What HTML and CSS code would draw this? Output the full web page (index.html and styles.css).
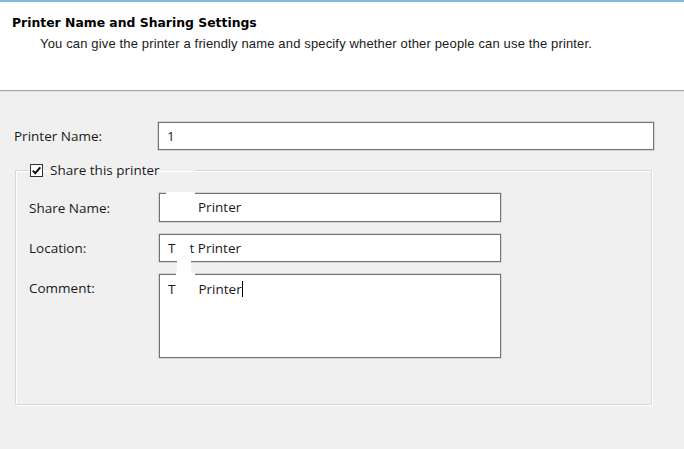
FILE: index.html
```html
<!DOCTYPE html>
<html>
<head>
<meta charset="utf-8">
<link rel="stylesheet" href="styles.css">
</head>
<body>
<div class="page">
  <header class="header">
    <h1 class="title">Printer Name and Sharing Settings</h1>
    <p class="subtitle">You can give the printer a friendly name and specify whether other people can use the printer.</p>
  </header>
  <main class="content">
    <div class="row row-top">
      <span class="label">Printer Name:</span>
      <div class="box box-wide">1</div>
    </div>
    <fieldset class="group">
      <legend class="legend">
        <span class="check">
          <svg width="13" height="13" viewBox="0 0 13 13"><rect x="0.5" y="0.5" width="12" height="12" fill="#fff" stroke="#333"/><path d="M2.8 6.6 L5.2 9.2 L10.3 3.4" fill="none" stroke="#111" stroke-width="2"/></svg>
        </span>
        <span class="legend-text">Share this printer</span>
      </legend>
      <div class="rows">
        <div class="row">
          <span class="label">Share Name:</span>
          <div class="box box-share"><span class="gap gap-share"></span>Printer</div>
        </div>
        <div class="row">
          <span class="label">Location:</span>
          <div class="box">T<span class="gap gap-loc"></span>t Printer</div>
        </div>
        <div class="row row-comment">
          <span class="label">Comment:</span>
          <div class="box box-area">T<span class="gap gap-com"></span>Printer<span class="caret"></span></div>
        </div>
      </div>
    </fieldset>
  </main>
</div>
</body>
</html>
```
FILE: styles.css
```css
html, body {
  margin: 0;
  padding: 0;
}
body {
  background: #f0f0f0;
  width: 684px;
  height: 449px;
  overflow: hidden;
}
.page {
  font-family: "Open Sans", "Noto Sans", sans-serif;
  font-size: 13.5px;
  color: #1a1a1a;
}
.header {
  background: #fff;
  border-top: 2px solid #86b9d8;
  border-bottom: 1px solid #a9a9a9;
  height: 88px;
  box-sizing: content-box;
  padding: 0 0 0 12px;
}
.title {
  margin: 0;
  padding-top: 13px;
  font-family: "DejaVu Sans", Verdana, sans-serif;
  font-weight: bold;
  font-size: 12.4px;
  letter-spacing: 0;
  line-height: 16px;
  color: #000;
}
.subtitle {
  margin: 5px 0 0 28px;
  font-family: "Liberation Sans", Arial, sans-serif;
  font-size: 13px;
  letter-spacing: 0.15px;
  line-height: 16px;
  color: #1a1a1a;
}
.content {
  padding: 30px 30px 0 14px;
  border-top: 1px solid #dedede;
}
.row {
  display: grid;
  grid-template-columns: 130px 342px;
  align-items: center;
}
.row-top {
  grid-template-columns: 144px 496px;
}
.label {
  line-height: 18px;
}
.box {
  background: #fff;
  border: 1px solid #737373;
  box-shadow: 0 0 0 1px #d6d6d6;
  height: 28px;
  box-sizing: border-box;
  padding: 0 0 0 8px;
  line-height: 26px;
  white-space: nowrap;
}
.box-share {
  height: 29px;
  line-height: 27px;
}
.group {
  margin: 11px 0 0 1px;
  padding: 0 0 0 13px;
  width: 637px;
  height: 244px;
  box-sizing: border-box;
  border: 1px solid #d9d9d9;
  box-shadow: inset 1px 1px 0 #fff, 1px 1px 0 #fff;
}
.legend {
  padding: 0 35px 0 1px;
  display: flex;
  align-items: center;
  gap: 7px;
  line-height: 18px;
}
.check {
  display: flex;
}
.rows {
  display: flex;
  flex-direction: column;
  gap: 12px;
  padding-top: 14px;
}
.row-comment {
  align-items: start;
}
.row-comment .label {
  padding-top: 5px;
}
.box-area {
  height: 84px;
  line-height: 18px;
  padding-top: 5px;
}
.gap {
  display: inline-block;
  position: relative;
  vertical-align: top;
  height: 1px;
}
.gap::after {
  content: "";
  position: absolute;
  background: #fff;
}
.gap-share {
  width: 30px;
}
.gap-share::after {
  left: -2px;
  width: 29px;
  top: -2px;
  height: 14px;
}
.gap-loc {
  width: 14px;
}
.gap-loc::after {
  left: 2px;
  width: 14px;
  top: 14px;
  height: 24px;
}
.gap-com {
  width: 23px;
}
.gap-com::after {
  left: 1px;
  width: 19px;
  top: -7px;
  height: 22px;
}
.caret {
  display: inline-block;
  width: 1px;
  height: 16px;
  background: #000;
  vertical-align: -3px;
}
```
